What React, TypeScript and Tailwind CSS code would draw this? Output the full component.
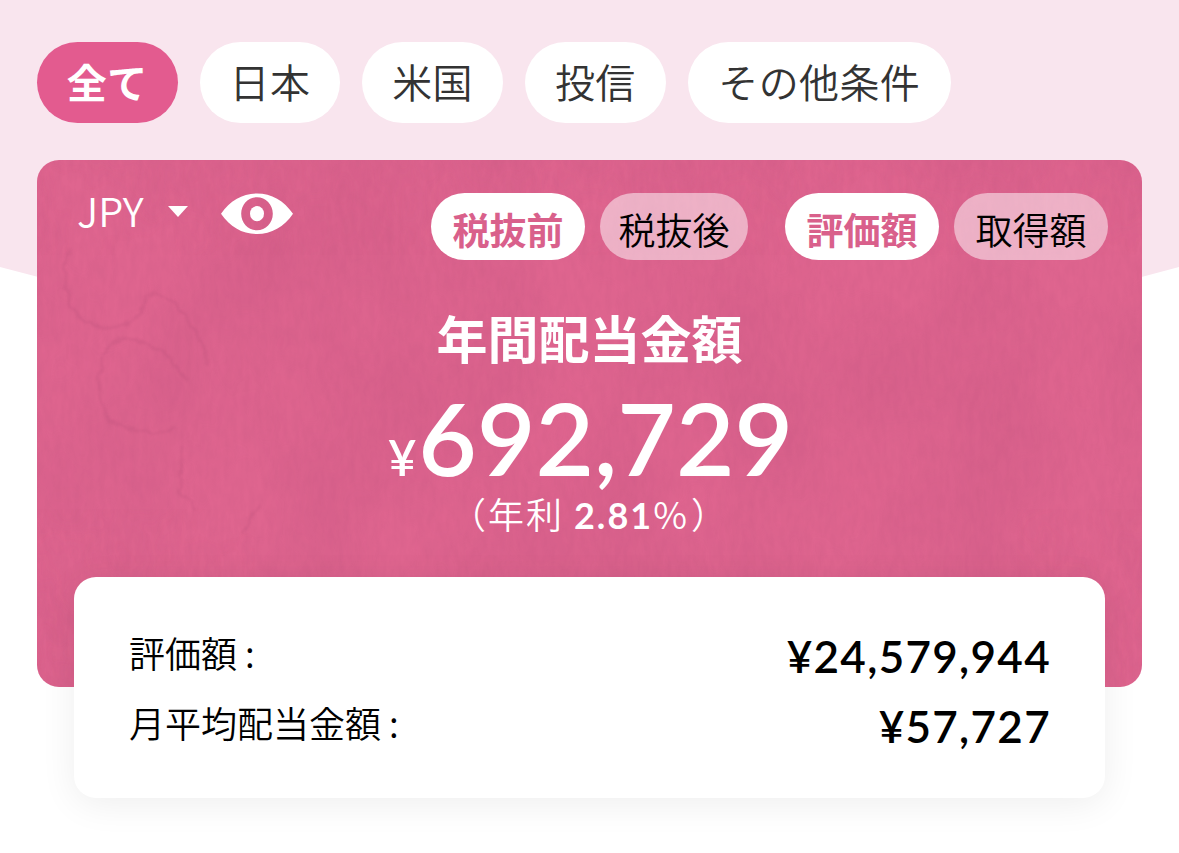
import { useState } from 'react';
import clsx from 'clsx';

const filters = [
  { id: 'all', label: '全て', width: 'w-[140.5px]' },
  { id: 'jp', label: '日本', width: 'w-[140.5px]' },
  { id: 'us', label: '米国', width: 'w-[140.5px]' },
  { id: 'fund', label: '投信', width: 'w-[140.5px]' },
  { id: 'other', label: 'その他条件', width: 'w-[263px]' },
];

const summary = [
  { label: '評価額', value: '¥24,579,944' },
  { label: '月平均配当金額', value: '¥57,727' },
];

function EyeIcon() {
  return (
    <svg width="72" height="42" viewBox="0 0 72 42" fill="none">
      <path
        fill="white"
        fillRule="evenodd"
        d="M0 20.7C9 7.5 21.5 0.4 36 0.4S63 7.5 72 20.7C63 33.9 50.5 41 36 41S9 33.9 0 20.7ZM36 4.2C27.3 4.2 20.2 11.4 20.2 20.7S27.3 37.2 36 37.2S51.8 30 51.8 20.7S44.7 4.2 36 4.2Z"
      />
      <ellipse cx="36" cy="20.7" rx="7" ry="7.6" fill="white" />
    </svg>
  );
}

// Paper grain and water stains on the card
function PaperTexture() {
  return (
    <svg className="absolute inset-0" width="1105" height="527" viewBox="0 0 1105 527" fill="none">
      <filter id="patches" x="0" y="0" width="100%" height="100%" colorInterpolationFilters="sRGB">
        <feTurbulence type="fractalNoise" baseFrequency="0.008 0.006" numOctaves="4" seed="4" />
        <feColorMatrix values="0 0 0 0 0.72  0 0 0 0 0.3  0 0 0 0 0.48  0 0 0 1.2 -0.35" />
      </filter>
      <filter id="grain" x="0" y="0" width="100%" height="100%" colorInterpolationFilters="sRGB">
        <feTurbulence type="fractalNoise" baseFrequency="0.16 0.06" numOctaves="3" seed="9" />
        <feColorMatrix values="0 0 0 0 0.6  0 0 0 0 0.25  0 0 0 0 0.42  0 0 0 1 -0.3" />
      </filter>
      <filter id="soft" x="-10%" y="-10%" width="120%" height="120%" colorInterpolationFilters="sRGB">
        <feTurbulence type="fractalNoise" baseFrequency="0.08" numOctaves="3" result="n" />
        <feDisplacementMap in="SourceGraphic" in2="n" scale="9" xChannelSelector="R" yChannelSelector="G" />
        <feGaussianBlur stdDeviation="1.3" />
      </filter>
      <rect width="1105" height="527" filter="url(#patches)" opacity="0.3" />
      <rect width="1105" height="527" filter="url(#grain)" opacity="0.12" />
      <g filter="url(#soft)" stroke="#b04a74" strokeWidth="3" opacity="0.2">
        <path d="M33 88C22 112 27 145 49 162C71 173 100 166 106 142C113 128 128 133 143 150C160 170 168 190 170 205" />
        <path d="M66 198C70 180 86 176 103 182C124 187 143 205 149 222M66 198C58 225 64 250 73 261C95 273 118 277 138 266" />
        <path d="M146 286C143 310 146 325 142 330L160 349M207 372L222 344" />
      </g>
    </svg>
  );
}

function Toggle({ options, widths }: { options: string[]; widths: string[] }) {
  const [active, setActive] = useState(options[0]);

  return (
    <div className="flex gap-[15px]">
      {options.map((option, i) => (
        <button
          key={option}
          onClick={() => setActive(option)}
          className={clsx(
            'flex h-[66.5px] items-center justify-center rounded-full pt-[5px] text-[37px] leading-none whitespace-nowrap',
            widths[i],
            active === option ? 'bg-white font-bold text-[#d9608b]' : 'bg-white/50 font-[350] text-black'
          )}
        >
          {option}
        </button>
      ))}
    </div>
  );
}

export default function App() {
  const [filter, setFilter] = useState('all');

  return (
    <div className="relative h-[853px] w-[1179px] overflow-hidden bg-white px-[37px] pt-[42px] font-['Noto_Sans_CJK_JP',sans-serif]">
      {/* Curved backdrop */}
      <svg className="absolute top-0 left-0" width="1179" height="400" viewBox="0 0 1179 400">
        <path d="M0 0H1179V267Q590 430 0 267Z" fill="#f9e5ee" />
      </svg>

      {/* Filters */}
      <div className="relative flex gap-[22.2px]">
        {filters.map((f) => (
          <button
            key={f.id}
            onClick={() => setFilter(f.id)}
            className={clsx(
              'flex h-[81.4px] items-center justify-center rounded-full pb-[3px] text-[40px] leading-none tracking-[0.4px] whitespace-nowrap',
              f.width,
              filter === f.id ? 'bg-[#e35b8f] font-bold text-white' : 'bg-white font-[350] text-[#333]'
            )}
          >
            {f.label}
          </button>
        ))}
      </div>

      {/* Annual dividend card */}
      <div className="relative mt-[36.9px] h-[526.7px] overflow-hidden rounded-[22px] bg-[#df658f] text-white">
        <PaperTexture />
        <div className="relative flex items-start justify-between pt-[33px] pr-[34px] pl-[40px]">
          <div className="flex items-center">
            <span className="-mt-[8px] w-[68px] text-[40px] leading-[40px] font-[350]">JPY</span>
            <svg className="mt-[-5px] ml-[23px]" width="20" height="11" viewBox="0 0 20 11">
              <path d="M0 0H20L10 11Z" fill="white" />
            </svg>
            <button className="ml-[33px]">
              <EyeIcon />
            </button>
          </div>
          <div className="flex gap-[37px]">
            <Toggle options={['税抜前', '税抜後']} widths={['w-[154px]', 'w-[148px]']} />
            <Toggle options={['評価額', '取得額']} widths={['w-[154px]', 'w-[154px]']} />
          </div>
        </div>

        <div className="relative flex flex-col items-center">
          <h1 className="mt-[47px] text-[51px] leading-[60px] font-bold">年間配当金額</h1>
          <div className="mt-[20px] flex items-baseline pl-[2px] font-['Lato',sans-serif] leading-[100px] font-semibold">
            <span className="mr-[2px] text-[49px]">¥</span>
            <span className="text-[101px]">692,729</span>
          </div>
          <p className="-mt-[16px] text-[36px] leading-[44px] font-[350] tracking-[2px]">
            （年利 <span className="font-['Lato',sans-serif] font-bold">2.81</span>
            <span className="text-[37px] tracking-[4px]">%</span>）
          </p>
        </div>
      </div>

      {/* Summary */}
      <div className="relative mx-[37px] -mt-[110px] flex h-[221px] flex-col rounded-[22px] bg-white px-[56px] pt-[43px] text-black shadow-[0_6px_36px_rgba(0,0,0,0.07)]">
        {summary.map((row) => (
          <div key={row.label} className="flex h-[70px] items-center justify-between">
            <span className="-ml-px pb-[6px] text-[36px] leading-none font-[350]">{row.label} :</span>
            <span className="-mr-[2px] pt-[2px] font-['Lato',sans-serif] text-[44px] leading-none font-semibold tracking-[1.3px]">
              {row.value}
            </span>
          </div>
        ))}
      </div>
    </div>
  );
}
